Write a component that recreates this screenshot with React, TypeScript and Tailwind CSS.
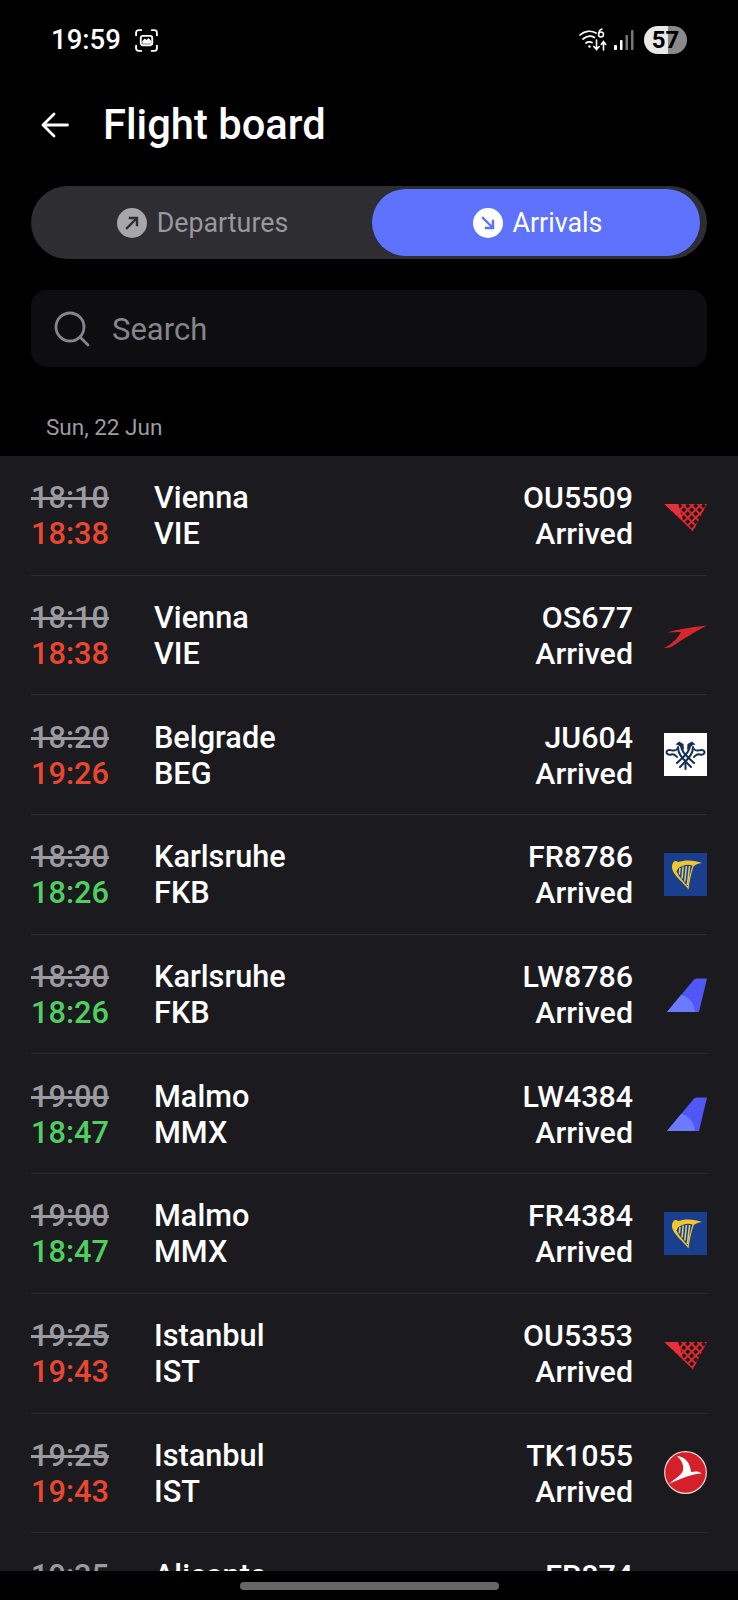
import React from 'react';

type Airline = 'ou' | 'os' | 'ju' | 'fr' | 'lw' | 'tk';

interface Flight {
  scheduled: string;
  actual: string;
  late: boolean;
  city: string;
  code: string;
  flight: string;
  airline: Airline;
}

const flights: Flight[] = [
  { scheduled: '18:10', actual: '18:38', late: true, city: 'Vienna', code: 'VIE', flight: 'OU5509', airline: 'ou' },
  { scheduled: '18:10', actual: '18:38', late: true, city: 'Vienna', code: 'VIE', flight: 'OS677', airline: 'os' },
  { scheduled: '18:20', actual: '19:26', late: true, city: 'Belgrade', code: 'BEG', flight: 'JU604', airline: 'ju' },
  { scheduled: '18:30', actual: '18:26', late: false, city: 'Karlsruhe', code: 'FKB', flight: 'FR8786', airline: 'fr' },
  { scheduled: '18:30', actual: '18:26', late: false, city: 'Karlsruhe', code: 'FKB', flight: 'LW8786', airline: 'lw' },
  { scheduled: '19:00', actual: '18:47', late: false, city: 'Malmo', code: 'MMX', flight: 'LW4384', airline: 'lw' },
  { scheduled: '19:00', actual: '18:47', late: false, city: 'Malmo', code: 'MMX', flight: 'FR4384', airline: 'fr' },
  { scheduled: '19:25', actual: '19:43', late: true, city: 'Istanbul', code: 'IST', flight: 'OU5353', airline: 'ou' },
  { scheduled: '19:25', actual: '19:43', late: true, city: 'Istanbul', code: 'IST', flight: 'TK1055', airline: 'tk' },
  { scheduled: '19:35', actual: '19:50', late: true, city: 'Alicante', code: 'ALC', flight: 'FR874', airline: 'fr' },
];

const AirlineLogo = ({ airline, id }: { airline: Airline; id: string }) => {
  if (airline === 'ou') {
    return (
      <svg viewBox="0 0 43 43" className="w-[43px] h-[43px]">
        <defs>
          <pattern id={`${id}-dots`} width="5.600" height="5.600" patternUnits="userSpaceOnUse" patternTransform="rotate(45 0 0)">
            <rect width="5.600" height="5.600" fill="#e0282f" />
            <rect x="1" y="1" width="3.600" height="3.600" fill="#1a1a1f" />
          </pattern>
          <clipPath id={`${id}-shape`}>
            <path d="M0 10H43L29 37.500Z" />
          </clipPath>
        </defs>
        <g clipPath={`url(#${id}-shape)`}>
          <rect width="43" height="43" fill={`url(#${id}-dots)`} />
          <path d="M0 10H14L19 26Z" fill="#e8303a" />
        </g>
      </svg>
    );
  }
  if (airline === 'os') {
    return (
      <svg viewBox="0 0 43 43" className="w-[43px] h-[43px]">
        <path d="M43 11.500C33 12.500 18 14.500 3 18.500L17 18C14 24 8 30 0 34C1.500 34 3.500 34 6 33.500C14 29 23 22 43 11.500Z" fill="#d8262c" />
      </svg>
    );
  }
  if (airline === 'ju') {
    return (
      <svg viewBox="0 0 43 43" className="w-[43px] h-[43px] bg-white">
        <g fill="none" stroke="#132f55" strokeWidth="2" strokeLinecap="round" strokeLinejoin="round">
          <path d="M17 12C17 17 19 20 30 30" />
          <path d="M26 12C26 17 24 20 13 30" />
          <path d="M14 14C14 20 16 23 27 34" />
          <path d="M29 14C29 20 27 23 16 34" />
          <path d="M13 16C10 20 7 15.500 3.500 17.500C1 19.500 3.500 22.500 7 21.500C10 20.500 11 22 13 24" />
          <path d="M30 16C33 20 36 15.500 39.500 17.500C42 19.500 39.500 22.500 36 21.500C33 20.500 32 22 30 24" />
          <path d="M21.500 30V36" />
        </g>
        <path d="M11.500 11.500L15 8.500L19.500 11L20 17L16.500 14L14 12Z" fill="#132f55" />
        <path d="M31.500 11.500L28 8.500L23.500 11L23 17L26.500 14L29 12Z" fill="#132f55" />
      </svg>
    );
  }
  if (airline === 'fr') {
    return (
      <svg viewBox="0 0 43 43" className="w-[43px] h-[43px] bg-[#1a3f8e]">
        <path d="M9 10C10 7.500 12.500 7.500 14 9C21 6.500 31 7 38 10C34 10.500 31 11.500 29.500 13.500C27 21 25.500 28 24.500 36.500C20 30 11 24 8.500 17C7.500 14 8 11.500 9 10Z" fill="#f3c72c" />
        <path d="M14 15.500C19 11.500 24 11 28.500 12.500C26.500 19 24.500 26 23.800 33.500C19.500 28 14.500 23.500 12.500 18.500Z" fill="#1a3f8e" />
        <g stroke="#d9cc68" strokeWidth="1.600">
          <path d="M16 15L15.300 21.500" />
          <path d="M19.200 13.500L18 25.500" />
          <path d="M22.400 13L20.800 28.500" />
          <path d="M25.600 13L23.400 32" />
        </g>
      </svg>
    );
  }
  if (airline === 'lw') {
    return (
      <svg viewBox="0 0 43 43" className="w-[43px] h-[43px]">
        <path d="M3 39L30 6.500C31 5.800 32 5.500 33 5.500H43L35 39Z" fill="#5157f5" />
        <path d="M3 39L17 22C24 23 30 29 31 39Z" fill="#6b7bff" />
      </svg>
    );
  }
  return (
    <svg viewBox="0 0 43 43" className="w-[43px] h-[43px]">
      <circle cx="21.500" cy="21.500" r="20.800" fill="#d5202a" stroke="#f3d6d2" strokeWidth="1.200" />
      <path d="M13 5C21 6 26 11 27 21C31 20 35 20 38 22.500C29 23 20 26 5 33C13 26 18 24 19 19C20 13 17 9 13 5Z" fill="#fff" />
    </svg>
  );
};

const FlightRow = ({ flight }: { flight: Flight }) => (
  <div className="px-[31px]">
    <div className="h-[119.7px] flex items-center border-b border-[#2d2d32]">
      <div className="w-[123px] shrink-0 pt-[2px] font-medium text-[30.7px] leading-[36px]">
        <div className="text-[#9a9a9f] line-through">{flight.scheduled}</div>
        <div className={flight.late ? 'text-[#ea4630]' : 'text-[#4fcf5f]'}>{flight.actual}</div>
      </div>
      <div className="flex-1 pt-[2px] font-medium text-[30.7px] leading-[36px] text-white">
        <div>{flight.city}</div>
        <div>{flight.code}</div>
      </div>
      <div className="pt-[2px] text-right font-medium text-[30.4px] leading-[36px] text-white">
        <div>{flight.flight}</div>
        <div>Arrived</div>
      </div>
      <div className="ml-[31px] w-[43px] h-[43px] shrink-0">
        <AirlineLogo airline={flight.airline} id={flight.flight} />
      </div>
    </div>
  </div>
);

const StatusBar = () => (
  <div className="h-[80px] flex items-center pl-[51px] pr-[51px] text-white">
    <span className="font-medium text-[27.5px]">19:59</span>
    <svg viewBox="0 0 24 24" className="ml-[13px] w-[25px] h-[25px]" fill="none" stroke="#fff" strokeWidth="1.800" strokeLinecap="round">
      <path d="M2 7V4.500C2 3 3 2 4.500 2H7M17 2H19.500C21 2 22 3 22 4.500V7M22 17V19.500C22 21 21 22 19.500 22H17M7 22H4.500C3 22 2 21 2 19.500V17" />
      <rect x="6.500" y="7.500" width="11" height="9" rx="2" />
      <path d="M8 12.500L10.500 10L12 11.500L14 9.500L16.500 12.500V15H8Z" fill="#fff" stroke="none" />
    </svg>
    <div className="ml-auto flex items-center">
      <svg viewBox="0 0 30 24" className="w-[30px] h-[24px]" fill="none" stroke="#fff" strokeLinecap="round">
        <path d="M1 7C5 3 12 2 17 5" strokeWidth="1.700" />
        <path d="M4 11C7.500 8 12 7.500 15.500 9.500" strokeWidth="1.700" />
        <path d="M7 15C9 13.500 11 13.500 13 14.500" strokeWidth="1.700" />
        <circle cx="10.500" cy="18.500" r="1.200" fill="#fff" stroke="none" />
        <path d="M17.500 12V21M14.800 18.500L17.500 21.500L20.200 18.500M24.500 22V14M22.300 16.500L24.500 13.500L26.700 16.500" strokeWidth="1.600" />
        <circle cx="22" cy="6.500" r="2.500" strokeWidth="1.500" />
        <path d="M19.700 6C20 3 21 1.500 23 1" strokeWidth="1.500" />
      </svg>
      <svg viewBox="0 0 20 20" className="ml-[5px] w-[20px] h-[20px]">
        <rect x="0" y="15" width="3" height="5" rx="1" fill="#fff" />
        <rect x="6" y="10" width="2.500" height="10" rx="0.800" fill="#fff" />
        <rect x="11.500" y="5" width="2.500" height="15" rx="0.800" fill="#77777a" />
        <rect x="17" y="0" width="2.500" height="20" rx="0.800" fill="#77777a" />
      </svg>
      <div className="ml-[10px] w-[43px] h-[28px] rounded-full bg-[linear-gradient(90deg,#e8e8e8_0%,#e8e8e8_56%,#8a8a8a_56%,#8a8a8a_100%)] flex items-center justify-center text-black font-bold text-[24px] leading-none">
        57
      </div>
    </div>
  </div>
);

export default function App() {
  return (
    <div className="w-[738px] h-[1600px] bg-black flex flex-col overflow-hidden font-['Roboto',sans-serif]">
      <StatusBar />

      <div className="h-[88px] flex items-center pl-[41px] pt-[2px] text-white">
        <svg viewBox="0 0 28 26" className="w-[28px] h-[26px]" fill="none" stroke="#fff" strokeWidth="2.800" strokeLinecap="round" strokeLinejoin="round">
          <path d="M26.500 13H2M13 2L2 13L13 24" />
        </svg>
        <h1 className="ml-[34px] font-medium text-[41.7px] leading-none">Flight board</h1>
      </div>

      <div className="mx-[31px] mt-[18px] h-[73px] rounded-full bg-[#2d2d32] flex p-[3px] pr-[7px]">
        <div className="flex-1 flex items-center justify-center gap-[10px] pl-[5px] pr-[6px]">
          <span className="w-[30px] h-[30px] rounded-full bg-[#a6a6ab] flex items-center justify-center">
            <svg viewBox="0 0 16 16" className="w-[16px] h-[16px]" fill="none" stroke="#2d2d32" strokeWidth="2.400" strokeLinecap="square">
              <path d="M3 13L12 4M6 3H13V10" />
            </svg>
          </span>
          <span className="pt-[2px] text-[26.8px] text-[#98989e]">Departures</span>
        </div>
        <div className="w-[328px] pl-[3px] rounded-full bg-[#5e72fd] flex items-center justify-center gap-[10px]">
          <span className="w-[30px] h-[30px] rounded-full bg-white flex items-center justify-center">
            <svg viewBox="0 0 16 16" className="w-[16px] h-[16px]" fill="none" stroke="#5e72fd" strokeWidth="2.400" strokeLinecap="square">
              <path d="M3 3L12 12M13 6V13H6" />
            </svg>
          </span>
          <span className="pt-[2px] text-[26.8px] text-white">Arrivals</span>
        </div>
      </div>

      <div className="mx-[31px] mt-[31px] h-[77px] rounded-[16px] bg-[#0e0e11] flex items-center pl-[23px]">
        <svg viewBox="0 0 36 36" className="w-[36px] h-[36px]" fill="none" stroke="#85858b" strokeWidth="2.800" strokeLinecap="round">
          <circle cx="16" cy="16" r="14" />
          <path d="M26.500 26.500L34 34" />
        </svg>
        <span className="ml-[22px] pt-[3px] text-[31px] text-[#85858b]">Search</span>
      </div>

      <div className="h-[89px] flex items-end pb-[16px] pl-[46px] text-[22.5px] leading-[26px] text-[#9c9ca1]">Sun, 22 Jun</div>

      <div className="flex-1 min-h-0 overflow-hidden bg-[#1a1a1f]">
        {flights.map((f) => (
          <FlightRow key={f.flight} flight={f} />
        ))}
      </div>

      <div className="h-[29px] shrink-0 bg-black flex justify-center pt-[11px]">
        <div className="w-[259px] h-[8px] rounded-full bg-[#666]" />
      </div>
    </div>
  );
}
